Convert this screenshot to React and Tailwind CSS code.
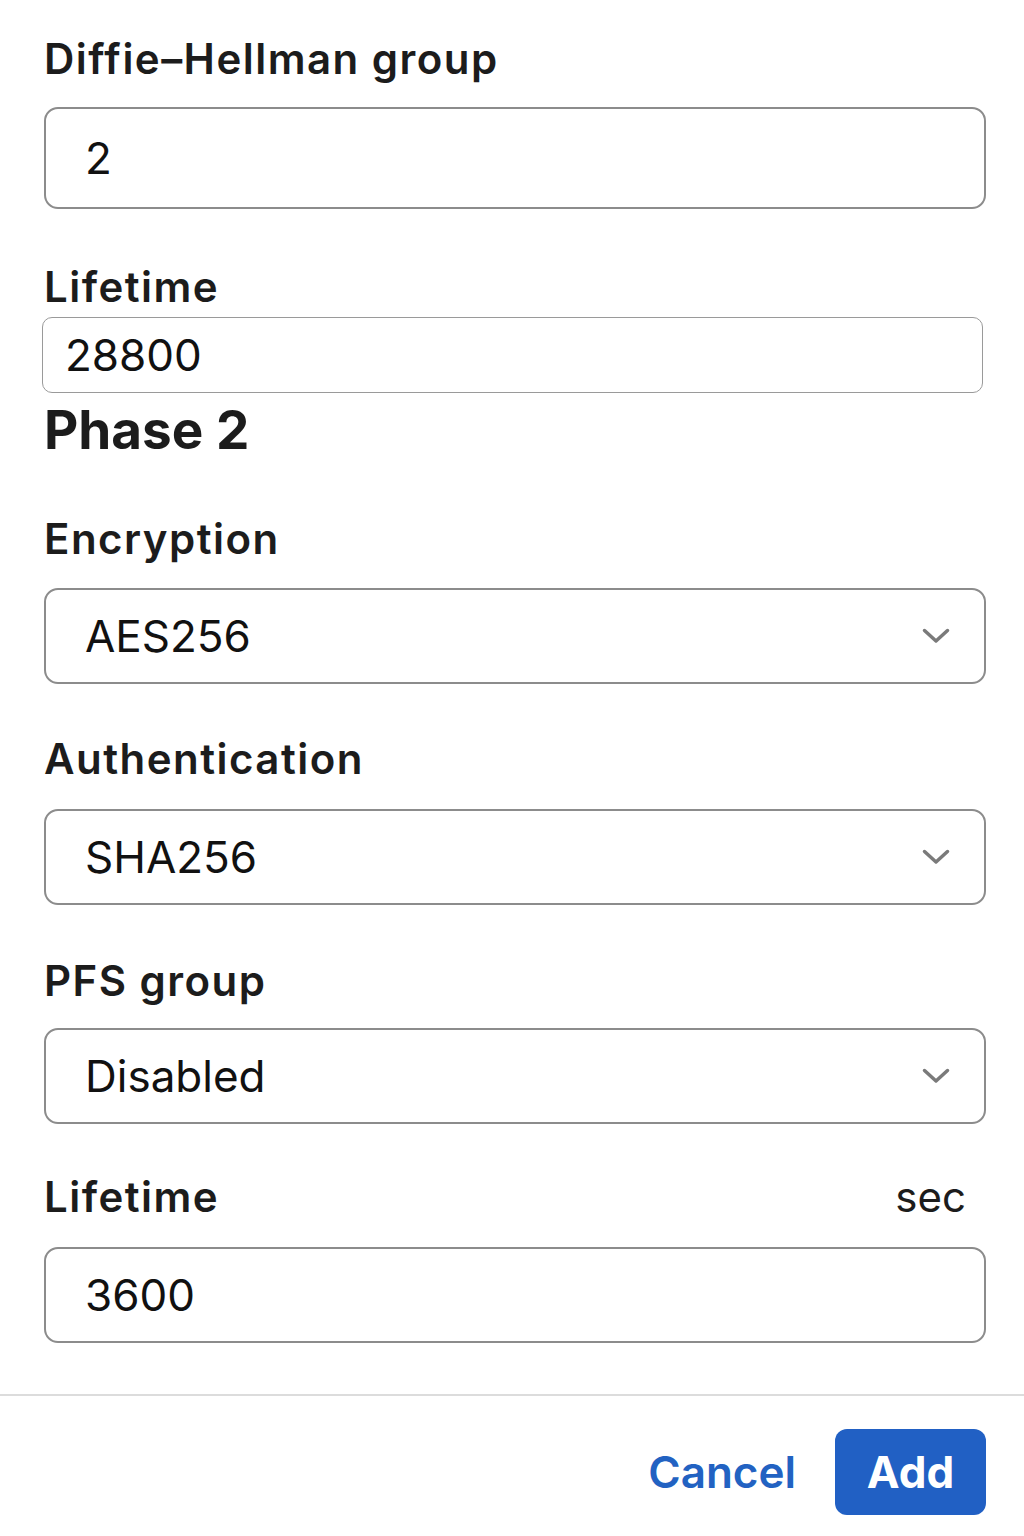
import React from "react";

const Chevron = () => (
  <svg width="28" height="16" viewBox="0 0 28 16" fill="none" className="shrink-0">
    <path d="M2.5 2.5 L14 13 L25.5 2.5" stroke="#7a7a7a" strokeWidth="3.5" strokeLinecap="round" strokeLinejoin="round" />
  </svg>
);

function Label({ children, className = "" }) {
  return (
    <div className={`text-[42px] leading-none font-semibold tracking-[0.035em] text-[#1c1c1c] ${className}`}>
      {children}
    </div>
  );
}

function SelectBox({ value, className = "" }) {
  return (
    <div className={`h-[96px] flex items-center justify-between pl-[39px] pr-[34px] border-2 border-[#8c8c8c] rounded-[14px] ${className}`}>
      <span className="text-[44px] text-[#111]">{value}</span>
      <Chevron />
    </div>
  );
}

export default function App() {
  return (
    <div className="w-[1024px] min-h-[1536px] bg-white" style={{ fontFamily: "Inter, 'Noto Sans', sans-serif" }}>
      <div className="pl-[44px] pr-[38px] pt-[38px]">
        {/* Phase 1 leftovers */}
        <Label className="text-[41px]">Diffie–Hellman group</Label>
        <div className="mt-[27px] h-[102px] flex items-center pl-[39px] border-2 border-[#8c8c8c] rounded-[14px]">
          <span className="text-[44px] text-[#111]">2</span>
        </div>

        <Label className="mt-[57px]">Lifetime</Label>
        <div className="mt-[9px] -ml-[2px] mr-[3px] h-[76px] flex items-center pl-[22px] border-[1.5px] border-[#9a9a9a] rounded-[10px]">
          <span className="text-[44px] text-[#111]">28800</span>
        </div>

        {/* Phase 2 */}
        <div className="mt-[11px] text-[53px] leading-none font-bold text-[#1c1c1c]">Phase 2</div>

        <Label className="mt-[61px]">Encryption</Label>
        <SelectBox value="AES256" className="mt-[28px]" />

        <Label className="mt-[54px]">Authentication</Label>
        <SelectBox value="SHA256" className="mt-[29px]" />

        <Label className="mt-[55px]">PFS group</Label>
        <SelectBox value="Disabled" className="mt-[26px]" />

        <div className="mt-[52px] flex items-center justify-between pr-[20px]">
          <Label>Lifetime</Label>
          <span className="text-[42px] leading-none text-[#1c1c1c]">sec</span>
        </div>
        <div className="mt-[29px] h-[96px] flex items-center pl-[39px] border-2 border-[#8c8c8c] rounded-[14px]">
          <span className="text-[44px] text-[#111]">3600</span>
        </div>
      </div>

      {/* Footer */}
      <div className="mt-[51px] border-t-2 border-[#dcdcdc] pt-[33px] pr-[38px] flex items-center justify-end gap-[39px]">
        <button className="text-[44px] font-semibold text-[#2262c2]">Cancel</button>
        <button className="w-[151px] h-[86px] rounded-[12px] bg-[#2160c4] text-white text-[44px] font-bold">Add</button>
      </div>
    </div>
  );
}
